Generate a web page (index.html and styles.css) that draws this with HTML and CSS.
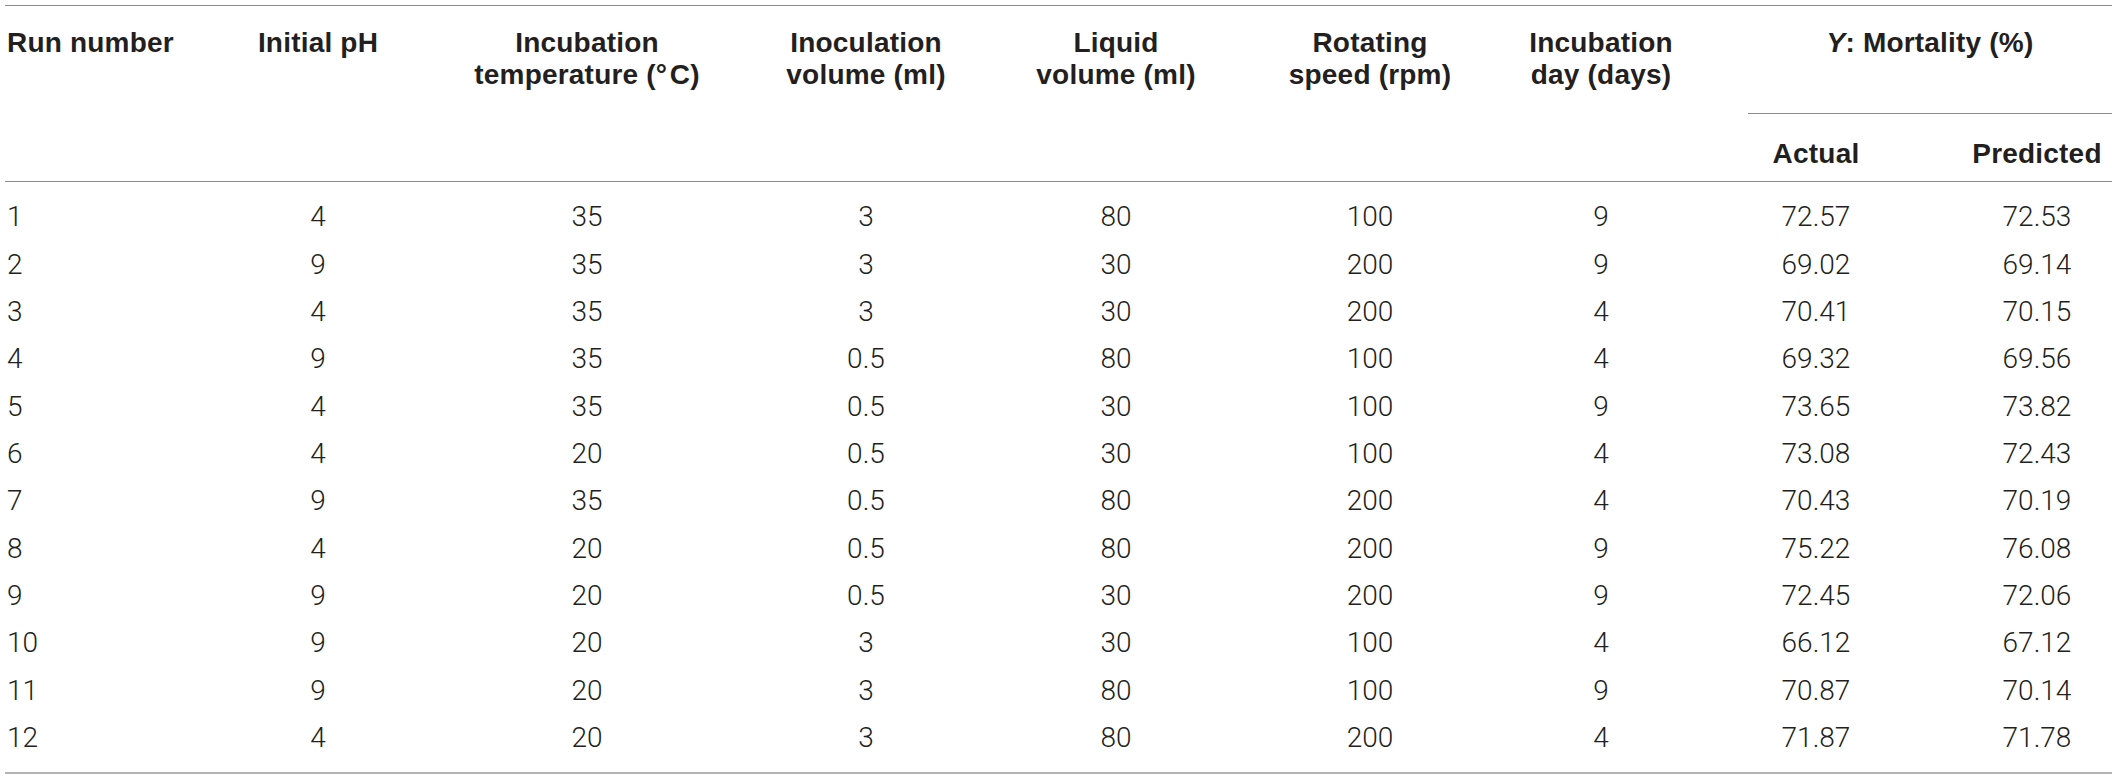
FILE: index.html
```html
<!DOCTYPE html>
<html lang="en">
<head>
    <meta charset="UTF-8">
    <meta name="viewport" content="width=device-width, initial-scale=1.0">
    <title>Mortality design runs</title>
    <link rel="stylesheet" href="styles.css">
</head>
<body>
    <table class="runs">
        <colgroup>
            <col class="c-run">
            <col class="c-ph">
            <col class="c-temp">
            <col class="c-inoc">
            <col class="c-liquid">
            <col class="c-speed">
            <col class="c-day">
            <col class="c-actual">
            <col class="c-pred">
        </colgroup>
        <thead>
            <tr>
                <th rowspan="2" class="left">Run number</th>
                <th rowspan="2">Initial pH</th>
                <th rowspan="2">Incubation<br>temperature (°&#8202;C)</th>
                <th rowspan="2">Inoculation<br>volume (ml)</th>
                <th rowspan="2">Liquid<br>volume (ml)</th>
                <th rowspan="2">Rotating<br>speed (rpm)</th>
                <th rowspan="2" class="day">Incubation<br>day (days)</th>
                <th colspan="2" class="group"><em>Y</em>: Mortality (%)</th>
            </tr>
            <tr>
                <th class="sub actual">Actual</th>
                <th class="sub pred">Predicted</th>
            </tr>
        </thead>
        <tbody id="rows"></tbody>
    </table>

    <script>
        const runs = [
            [1, 4, 35, 3, 80, 100, 9, '72.57', '72.53'],
            [2, 9, 35, 3, 30, 200, 9, '69.02', '69.14'],
            [3, 4, 35, 3, 30, 200, 4, '70.41', '70.15'],
            [4, 9, 35, 0.5, 80, 100, 4, '69.32', '69.56'],
            [5, 4, 35, 0.5, 30, 100, 9, '73.65', '73.82'],
            [6, 4, 20, 0.5, 30, 100, 4, '73.08', '72.43'],
            [7, 9, 35, 0.5, 80, 200, 4, '70.43', '70.19'],
            [8, 4, 20, 0.5, 80, 200, 9, '75.22', '76.08'],
            [9, 9, 20, 0.5, 30, 200, 9, '72.45', '72.06'],
            [10, 9, 20, 3, 30, 100, 4, '66.12', '67.12'],
            [11, 9, 20, 3, 80, 100, 9, '70.87', '70.14'],
            [12, 4, 20, 3, 80, 200, 4, '71.87', '71.78']
        ];

        // Build the body rows from the run data
        const tbody = document.getElementById('rows');
        runs.forEach(run => {
            const tr = document.createElement('tr');
            run.forEach(value => {
                const td = document.createElement('td');
                td.textContent = value;
                tr.appendChild(td);
            });
            tbody.appendChild(tr);
        });
    </script>
</body>
</html>
```

FILE: styles.css
```css
body {
    margin: 0;
    background: #ffffff;
    color: #231f20;
    font-family: "Liberation Sans", Arial, sans-serif;
}

.runs {
    border-collapse: collapse;
    table-layout: fixed;
    width: 2107px;
    margin: 5px 0 0 5px;
    border-top: 1px solid #8c8c8c;
    border-bottom: 2px solid #b4b4b4;
}

.c-run { width: 211px; }
.c-ph { width: 204px; }
.c-temp { width: 334px; }
.c-inoc { width: 224px; }
.c-liquid { width: 276px; }
.c-speed { width: 232px; }
.c-day { width: 262px; }
.c-actual { width: 182px; }
.c-pred { width: 182px; }

thead {
    border-bottom: 1px solid #8c8c8c;
}

th {
    font-size: 28px;
    font-weight: bold;
    line-height: 32px;
    letter-spacing: 0.2px;
    text-align: center;
    vertical-align: top;
    padding: 21px 0 0 0;
    white-space: nowrap;
}

th.left { text-align: left; padding-left: 2px; }
th.day { padding-right: 32px; }

th.group {
    padding-bottom: 54px;
    border-bottom: 1px solid #8c8c8c;
}

th.group em { font-style: italic; }

th.sub {
    padding-top: 24px;
    padding-bottom: 11px;
}

th.actual { padding-right: 46px; }
th.pred { padding-left: 32px; }

td {
    font-family: Roboto, "Liberation Sans", sans-serif;
    font-weight: 300;
    font-size: 28px;
    line-height: 32px;
    text-align: center;
    padding: 7.68px 0;
    white-space: nowrap;
}

td:nth-child(1) { text-align: left; padding-left: 2px; }
td:nth-child(7) { padding-right: 32px; }
td:nth-child(8) { padding-right: 46px; }
td:nth-child(9) { padding-left: 32px; }

tbody tr:first-child td { padding-top: 19.3px; }
tbody tr:last-child td { padding-bottom: 17.7px; }
```
